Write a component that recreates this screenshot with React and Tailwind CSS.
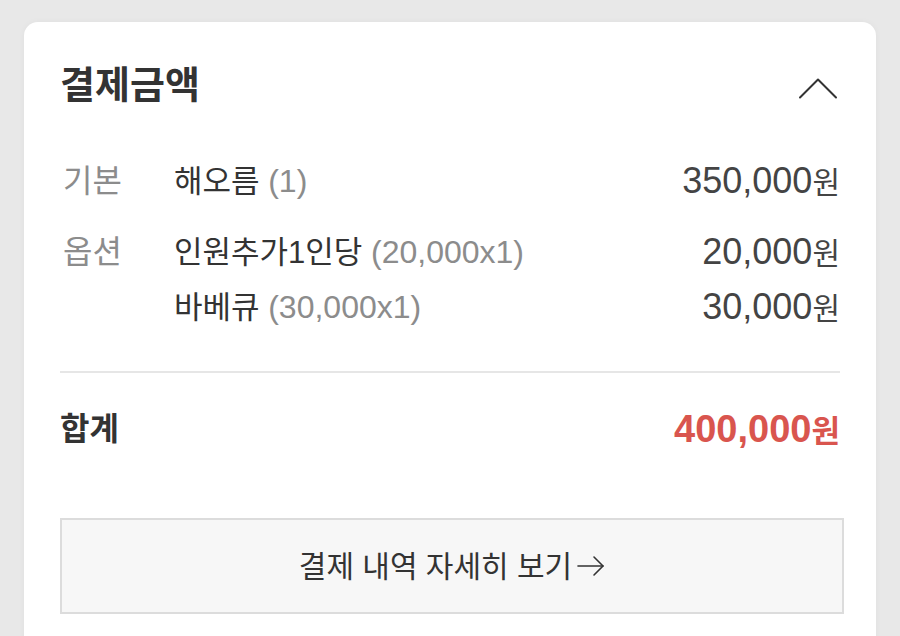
const items = [
  { label: "기본", rows: [{ name: "해오름", qty: "(1)", price: "350,000" }] },
  {
    label: "옵션",
    rows: [
      { name: "인원추가1인당", qty: "(20,000x1)", price: "20,000" },
      { name: "바베큐", qty: "(30,000x1)", price: "30,000" },
    ],
  },
];

function ChevronUp() {
  return (
    <svg width="40" height="22" viewBox="0 0 40 22" fill="none" aria-hidden="true">
      <polyline points="2,20.5 20,2.5 38,20.5" stroke="#333" strokeWidth="2" strokeLinecap="round" strokeLinejoin="round" />
    </svg>
  );
}

function ArrowRightThin() {
  return (
    <svg width="28" height="22" viewBox="0 0 28 22" fill="none" aria-hidden="true">
      <line x1="1" y1="11" x2="26" y2="11" stroke="#333" strokeWidth="1.6" strokeLinecap="round" />
      <polyline points="17,2 26,11 17,20" stroke="#333" strokeWidth="1.6" strokeLinecap="round" strokeLinejoin="round" />
    </svg>
  );
}

export default function App() {
  return (
    <div className="h-[636px] overflow-hidden bg-[#e8e8e8] pt-[22px] font-['Liberation_Sans','Noto_Sans_CJK_KR',sans-serif]">
      <section className="mx-6 rounded-t-[14px] bg-white px-9 pt-[38px] pb-10 shadow-[0_0_6px_rgba(0,0,0,0.04)]">
        <header className="flex h-[50px] items-center justify-between">
          <h2 className="text-[38px] font-bold leading-[50px] text-[#333]">결제금액</h2>
          <span className="mr-[2px] mt-1.5">
            <ChevronUp />
          </span>
        </header>

        <div className="mt-[43px] flex flex-col gap-4">
          {items.map((group) => (
            <div key={group.label} className="flex">
              <div className="flex h-[55px] w-[114px] shrink-0 items-center pl-[3px] text-[32px] text-[#8c8c8c]">
                {group.label}
              </div>
              <div className="flex flex-1 flex-col">
                {group.rows.map((row) => (
                  <div key={row.name} className="flex h-[55px] items-center justify-between">
                    <p className="text-[31px] leading-none text-[#333]">
                      {row.name} <span className="text-[32px] text-[#8c8c8c]">{row.qty}</span>
                    </p>
                    <p className="leading-none text-[#444]">
                      <span className="text-[36px]">{row.price}</span>
                      <span className="text-[30px]">원</span>
                    </p>
                  </div>
                ))}
              </div>
            </div>
          ))}
        </div>

        <hr className="mt-[37px] border-t-2 border-[#e6e6e6]" />

        <div className="mt-[31px] flex h-[50px] items-center justify-between font-bold">
          <span className="text-[32px] leading-none text-[#333]">합계</span>
          <p className="leading-none text-[#d9554e]">
            <span className="text-[38px]">400,000</span>
            <span className="text-[31px]">원</span>
          </p>
        </div>

        <button
          type="button"
          className="mt-16 flex h-[96px] w-[784px] items-center justify-center gap-[5px] border-2 border-[#dcdcdc] bg-[#f7f7f7] text-[30px] text-[#333]"
        >
          결제 내역 자세히 보기
          <ArrowRightThin />
        </button>
      </section>
    </div>
  );
}
